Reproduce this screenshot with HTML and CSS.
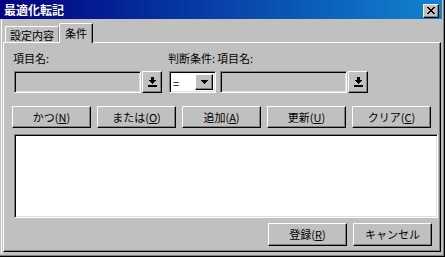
FILE: index.html
```html
<!DOCTYPE html>
<html lang="ja">
<head>
<meta charset="utf-8">
<title>最適化転記</title>
<link rel="stylesheet" href="styles.css">
</head>
<body>
<div class="window">
  <div class="titlebar">
    <span class="title">最適化転記</span>
    <div class="close">
      <svg width="8" height="7" viewBox="0 0 8 7" shape-rendering="crispEdges"><path d="M0 0h2v1H0zM6 0h2v1H6zM1 1h2v1H1zM5 1h2v1H5zM2 2h4v1H2zM3 3h2v1H3zM2 4h4v1H2zM1 5h2v1H1zM5 5h2v1H5zM0 6h2v1H0zM6 6h2v1H6z" fill="#000"/></svg>
    </div>
  </div>
  <div class="content">
    <div class="tabs">
      <div class="tab">設定内容</div>
      <div class="tab active">条件</div>
    </div>
    <div class="panel">
      <div class="fields">
        <span class="lbl lbl-1">項目名:</span>
        <span class="lbl lbl-2">判断条件:</span>
        <span class="lbl lbl-3">項目名:</span>
        <div class="field f-1"></div>
        <div class="btn icon-btn b-1">
          <svg width="9" height="10" viewBox="0 0 9 10" shape-rendering="crispEdges"><path d="M3 0h3v3H3zM1 3h7v1H1zM2 4h5v1H2zM3 5h3v1H3zM4 6h1v1H4zM0 8h9v2H0z" fill="#000"/></svg>
        </div>
        <div class="combo c-1">
          <span class="combo-val">=</span>
          <div class="btn combo-btn">
            <svg width="7" height="4" viewBox="0 0 7 4" shape-rendering="crispEdges"><path d="M0 0h7v1H0zM1 1h5v1H1zM2 2h3v1H2zM3 3h1v1H3z" fill="#000"/></svg>
          </div>
        </div>
        <div class="field f-2"></div>
        <div class="btn icon-btn b-2">
          <svg width="9" height="10" viewBox="0 0 9 10" shape-rendering="crispEdges"><path d="M3 0h3v3H3zM1 3h7v1H1zM2 4h5v1H2zM3 5h3v1H3zM4 6h1v1H4zM0 8h9v2H0z" fill="#000"/></svg>
        </div>
      </div>
      <div class="actions">
        <div class="btn push">かつ(<u>N</u>)</div>
        <div class="btn push">または(<u>O</u>)</div>
        <div class="btn push">追加(<u>A</u>)</div>
        <div class="btn push">更新(<u>U</u>)</div>
        <div class="btn push">クリア(<u>C</u>)</div>
      </div>
      <div class="listbox"></div>
      <div class="footer">
        <div class="btn push tall">登録(<u>R</u>)</div>
        <div class="btn push tall">キャンセル</div>
      </div>
    </div>
  </div>
</div>
</body>
</html>
```

FILE: styles.css
```css
html, body {
  margin: 0;
  padding: 0;
  background: #c0c0c0;
}

body {
  width: 445px;
  height: 257px;
  overflow: hidden;
  font-family: "Noto Sans CJK JP", "Noto Sans", sans-serif;
  font-size: 11px;
  color: #000;
}

.window {
  width: 445px;
  height: 257px;
  box-sizing: border-box;
  border-right: 1px solid #000;
  border-bottom: 1px solid #000;
  padding: 0 2px 2px 0;
  box-shadow: inset -1px -1px #808080;
  background: #c0c0c0;
}

.titlebar {
  height: 19px;
  display: flex;
  align-items: flex-start;
  justify-content: space-between;
  background: linear-gradient(to right, #000080, #1084d0);
}

.title {
  color: #fff;
  font-weight: bold;
  font-size: 12px;
  line-height: 19px;
  padding-left: 4px;
  letter-spacing: 0;
}

.close {
  width: 16px;
  height: 14px;
  margin: 4px 3px 0 0;
  box-sizing: border-box;
  background: #c0c0c0;
  border-top: 1px solid #fff;
  border-left: 1px solid #fff;
  border-right: 1px solid #000;
  border-bottom: 1px solid #000;
  box-shadow: inset -1px -1px #808080;
  display: flex;
  align-items: center;
  justify-content: center;
  padding: 0 1px 1px 0;
}

.content {
  margin-left: 1px;
  border-left: 1px solid #fff;
  padding: 0 1px 2px 1px;
}

.tabs {
  height: 23px;
  display: flex;
  align-items: flex-end;
  padding-left: 2px;
  position: relative;
  z-index: 2;
}

.tab {
  box-sizing: border-box;
  height: 16px;
  width: 54px;
  border-top: 1px solid #fff;
  border-left: 1px solid #fff;
  border-right: 1px solid #808080;
  border-top-left-radius: 2px;
  padding: 2px 0 0 4px;
  line-height: 13px;
  white-space: nowrap;
}

.tab.active {
  width: 34px;
  height: 20px;
  margin-bottom: -1px;
  background: #c0c0c0;
  border-right: 1px solid #000;
  box-shadow: inset -1px 0 #808080;
  border-top-right-radius: 1px;
  padding: 3px 0 0 5px;
}

.panel {
  box-sizing: border-box;
  height: 210px;
  border-top: 1px solid #fff;
  border-left: 1px solid #fff;
  border-right: 1px solid #000;
  border-bottom: 1px solid #000;
  box-shadow: inset -1px -1px #808080;
  padding-top: 9px;
  display: flex;
  flex-direction: column;
}

.fields {
  display: grid;
  grid-template-columns: 127px 1px 20px 7px 47px 4px 127px 1px 20px;
  grid-template-rows: 13px 22px;
  row-gap: 6px;
  margin-left: 10px;
}

.lbl {
  line-height: 13px;
  white-space: nowrap;
  grid-row: 1;
}

.lbl-1 { grid-column: 1 / 4; margin-left: -1px; }
.lbl-2 { grid-column: 5 / 6; margin-left: -1px; }
.lbl-3 { grid-column: 7 / 10; margin-left: -3px; }

.field {
  grid-row: 2;
  box-sizing: border-box;
  border-top: 1px solid #808080;
  border-left: 1px solid #808080;
  border-right: 1px solid #fff;
  border-bottom: 1px solid #fff;
  box-shadow: inset 1px 1px #000, inset -1px -1px #dfdfdf;
  background: #c0c0c0;
}

.f-1 { grid-column: 1; }
.f-2 { grid-column: 7; }

.btn {
  box-sizing: border-box;
  background: #c0c0c0;
  border-top: 1px solid #fff;
  border-left: 1px solid #fff;
  border-right: 1px solid #000;
  border-bottom: 1px solid #000;
  box-shadow: inset -1px -1px #808080;
  display: flex;
  align-items: center;
  justify-content: center;
}

.icon-btn {
  grid-row: 2;
}

.b-1 { grid-column: 3; }
.b-2 { grid-column: 9; }

.combo {
  grid-row: 2;
  grid-column: 5;
  box-sizing: border-box;
  border-top: 1px solid #808080;
  border-left: 1px solid #808080;
  border-right: 1px solid #fff;
  border-bottom: 1px solid #fff;
  box-shadow: inset 1px 1px #000, inset -1px -1px #dfdfdf;
  background: #fff;
  display: flex;
  align-items: stretch;
  padding: 2px 2px 2px 2px;
}

.combo-val {
  flex: 1;
  line-height: 18px;
  padding-left: 1px;
}

.combo-btn {
  width: 18px;
  flex: none;
}

.actions {
  display: flex;
  gap: 6px;
  margin: 13px 0 0 8px;
}

.push {
  width: 79px;
  height: 22px;
  line-height: 13px;
  white-space: nowrap;
}

.push u {
  text-decoration: underline;
  text-underline-offset: 1px;
}

.listbox {
  box-sizing: border-box;
  height: 84px;
  margin: 6px 2px 0 10px;
  background: #fff;
  border-top: 1px solid #808080;
  border-left: 1px solid #808080;
  border-right: 1px solid #fff;
  border-bottom: 1px solid #fff;
  box-shadow: inset 1px 1px #000, inset -1px -1px #dfdfdf;
}

.footer {
  display: flex;
  justify-content: flex-end;
  gap: 6px;
  margin: 5px 8px 0 0;
}

.push.tall {
  height: 23px;
}
```
